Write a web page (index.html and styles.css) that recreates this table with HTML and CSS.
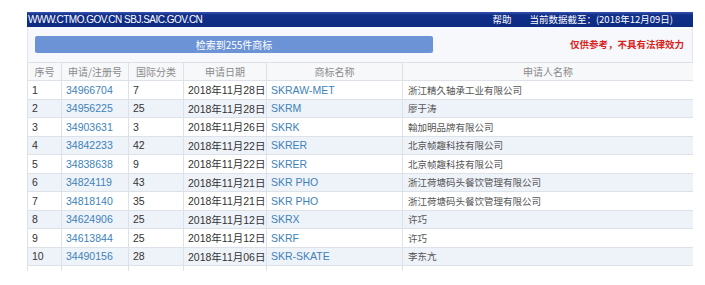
FILE: index.html
```html
<!DOCTYPE html>
<html lang="zh-CN">
<head>
<meta charset="utf-8">
<title>商标检索</title>
<link rel="stylesheet" href="styles.css">
</head>
<body>
<div class="page">
  <div class="topbar">
    <span class="site">WWW.CTMO.GOV.CN SBJ.SAIC.GOV.CN</span>
    <span class="info"><span class="help">帮助</span><span class="date">当前数据截至：(2018年12月09日)</span></span>
  </div>
  <div class="toolbar">
    <div class="result-btn">检索到255件商标</div>
    <div class="notice">仅供参考，不具有法律效力</div>
  </div>
  <div class="table-wrap">
    <table class="grid">
      <colgroup>
        <col class="c1"><col class="c2"><col class="c3"><col class="c4"><col class="c5"><col class="c6">
      </colgroup>
      <thead>
        <tr><th>序号</th><th>申请/注册号</th><th>国际分类</th><th>申请日期</th><th>商标名称</th><th>申请人名称</th></tr>
      </thead>
      <tbody>
        <tr><td>1</td><td class="lnk">34966704</td><td>7</td><td>2018年11月28日</td><td class="lnk">SKRAW-MET</td><td class="cn">浙江精久轴承工业有限公司</td></tr>
        <tr><td>2</td><td class="lnk">34956225</td><td>25</td><td>2018年11月28日</td><td class="lnk">SKRM</td><td class="cn">廖于涛</td></tr>
        <tr><td>3</td><td class="lnk">34903631</td><td>3</td><td>2018年11月26日</td><td class="lnk">SKRK</td><td class="cn">翰加明品牌有限公司</td></tr>
        <tr><td>4</td><td class="lnk">34842233</td><td>42</td><td>2018年11月22日</td><td class="lnk">SKRER</td><td class="cn">北京帧趣科技有限公司</td></tr>
        <tr><td>5</td><td class="lnk">34838638</td><td>9</td><td>2018年11月22日</td><td class="lnk">SKRER</td><td class="cn">北京帧趣科技有限公司</td></tr>
        <tr><td>6</td><td class="lnk">34824119</td><td>43</td><td>2018年11月21日</td><td class="lnk">SKR PHO</td><td class="cn">浙江荷塘码头餐饮管理有限公司</td></tr>
        <tr><td>7</td><td class="lnk">34818140</td><td>35</td><td>2018年11月21日</td><td class="lnk">SKR PHO</td><td class="cn">浙江荷塘码头餐饮管理有限公司</td></tr>
        <tr><td>8</td><td class="lnk">34624906</td><td>25</td><td>2018年11月12日</td><td class="lnk">SKRX</td><td class="cn">许巧</td></tr>
        <tr><td>9</td><td class="lnk">34613844</td><td>25</td><td>2018年11月12日</td><td class="lnk">SKRF</td><td class="cn">许巧</td></tr>
        <tr><td>10</td><td class="lnk">34490156</td><td>28</td><td>2018年11月06日</td><td class="lnk">SKR-SKATE</td><td class="cn">李东亢</td></tr>
        <tr class="stub"><td></td><td></td><td></td><td></td><td></td><td></td></tr>
      </tbody>
    </table>
  </div>
</div>
</body>
</html>
```

FILE: styles.css
```css
html, body {
  margin: 0;
  padding: 0;
  background: #ffffff;
}
body {
  font-family: "Liberation Sans", "Noto Sans CJK SC", sans-serif;
  font-size: 10px;
  color: #333333;
}
.page {
  margin: 12px 0 0 27px;
  width: 666px;
}
.topbar {
  height: 15px;
  background: linear-gradient(#3553b0 0, #112f88 3px, #0e2b82 100%);
  color: #ffffff;
  display: flex;
  justify-content: space-between;
  align-items: center;
  font-size: 10px;
  line-height: 15px;
}
.site {
  letter-spacing: -0.5px;
  padding-left: 1px;
}
.info {
  display: flex;
  gap: 18px;
  padding-right: 20px;
  font-family: "Noto Sans CJK SC", sans-serif;
  font-size: 9.5px;
}
.toolbar {
  height: 35px;
  box-sizing: border-box;
  background: #f7f8fb;
  border-left: 1px solid #e2e5ec;
  border-right: 1px solid #e2e5ec;
  display: flex;
  justify-content: space-between;
  align-items: flex-start;
  padding: 9px 8px 0 7px;
}
.result-btn {
  width: 398px;
  height: 17px;
  background: #6c93d5;
  color: #ffffff;
  border-radius: 2px;
  text-align: center;
  line-height: 17px;
  font-family: "Noto Sans CJK SC", sans-serif;
  font-size: 10px;
}
.notice {
  color: #d7231c;
  font-weight: bold;
  font-family: "Noto Sans CJK SC", sans-serif;
  font-size: 9.5px;
  line-height: 17px;
}
.table-wrap {
  height: 209px;
  overflow: hidden;
}
.grid {
  width: 666px;
  border-collapse: collapse;
  table-layout: fixed;
  font-size: 10px;
}
.c1 { width: 34px; }
.c2 { width: 67px; }
.c3 { width: 55px; }
.c4 { width: 83px; }
.c5 { width: 136px; }
.c6 { width: 291px; }
.grid th, .grid td {
  border: 1px solid #dde1e8;
  padding: 0 4px;
  white-space: nowrap;
  overflow: hidden;
}
.grid th {
  height: 17px;
  background: #f7f8fa;
  color: #8a8a8a;
  font-weight: normal;
  text-align: center;
  font-family: "Noto Sans CJK SC", sans-serif;
  font-size: 10px;
}
.grid td {
  height: 17.5px;
  text-align: left;
  color: #333333;
  font-size: 10.5px;
}
.grid tbody tr:nth-child(even) td {
  background: #eef2f9;
}
.grid tbody tr.stub td {
  background: #ffffff;
}
.grid td.lnk {
  color: #3d82b8;
}
.grid td.cn {
  font-family: "Noto Sans CJK SC", sans-serif;
  font-size: 9.5px;
  color: #555555;
  padding-left: 5px;
}
```
